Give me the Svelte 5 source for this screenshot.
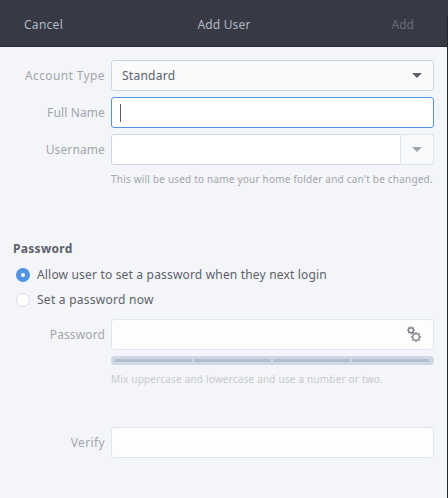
<script>
  const teeth = [0, 45, 90, 135, 180, 225, 270, 315];
  const gears = [
    { x: 4, y: 4.2, r: 2.4, tip: 4 },
    { x: 9, y: 11, r: 3.3, tip: 5.1 }
  ];
</script>

<div class="dialog">
  <header>
    <span class="cancel">Cancel</span>
    <span class="title">Add User</span>
    <span class="add">Add</span>
  </header>
  <i class="edge"></i>

  <main>
    <div class="row">
      <span class="label type">Account Type</span>
      <div class="field combo"><span class="standard">Standard</span><i class="arrow"></i></div>
    </div>
    <div class="row">
      <span class="label">Full Name</span>
      <div class="field focus"><i class="caret"></i></div>
    </div>
    <div class="row">
      <span class="label">Username</span>
      <div class="field split"><div class="drop"><i class="arrow"></i></div></div>
    </div>
    <p class="hint home">This will be used to name your home folder and can't be changed.</p>

    <h2>Password</h2>
    <div class="choice"><i class="radio on"></i><span class="allow">Allow user to set a password when they next login</span></div>
    <div class="choice"><i class="radio"></i><span class="now">Set a password now</span></div>

    <div class="row">
      <span class="label">Password</span>
      <div class="field off">
        <svg width="15" height="17" viewBox="0 0 15 17" fill="none" stroke="#7c7f87">
          {#each gears as g}
            <circle cx={g.x} cy={g.y} r={g.r} stroke-width="1.2" />
            {#each teeth as a}
              <path d="M{g.x} {g.y - g.r}V{g.y - g.tip}" stroke-width="1.3" transform="rotate({a} {g.x} {g.y})" />
            {/each}
          {/each}
        </svg>
      </div>
    </div>
    <div class="level"><i></i><i></i><i></i><i></i></div>
    <p class="hint mix">Mix uppercase and lowercase and use a number or two.</p>

    <div class="row verify">
      <span class="label vf">Verify</span>
      <div class="field off"></div>
    </div>
  </main>
</div>

<style>
  .dialog {
    position: relative;
    box-sizing: border-box;
    width: 448px;
    height: 498px;
    overflow: hidden;
    background: #f4f5f8;
    color: #5c616c;
    font: 12px/16px "Noto Sans", sans-serif;
    white-space: nowrap;
  }
  header {
    box-sizing: border-box;
    height: 47px;
    padding: 3px 24px 0;
    display: grid;
    grid-template-columns: 1fr auto 1fr;
    align-items: center;
    background: #373a45;
    border-bottom: 1px solid #2b2d37;
    color: #afb8c5;
  }
  .cancel { letter-spacing: 0.28px; }
  .title { letter-spacing: 0.15px; }
  .add { justify-self: end; margin-right: 10px; color: #686c77; }
  .edge {
    position: absolute;
    right: 0;
    top: 16px;
    bottom: 0;
    width: 1px;
    background: #24262d;
  }
  main { padding: 13px 14px 0 13px; }
  .row { display: flex; align-items: center; height: 31px; margin-bottom: 6px; }
  .label { width: 92px; margin-right: 6px; text-align: right; color: #a3a5ac; letter-spacing: 0.12px; }
  .type { letter-spacing: 0.38px; }
  .vf { letter-spacing: 0.38px; }
  .field {
    box-sizing: border-box;
    width: 323px;
    height: 31px;
    display: flex;
    align-items: center;
    background: #fff;
    border: 1px solid #cdd5e5;
    border-radius: 3px;
  }
  .combo { justify-content: space-between; padding: 0 11px 0 10px; background: #fafafb; }
  .standard { letter-spacing: 0.25px; }
  .focus { padding-left: 8px; border-color: #5294e2; }
  .caret { width: 1px; height: 18px; background: #5c616c; }
  .split { justify-content: flex-end; }
  .drop {
    box-sizing: border-box;
    width: 34px;
    height: 31px;
    margin-right: -1px;
    display: flex;
    align-items: center;
    justify-content: center;
    background: #f8f9fb;
    border: 1px solid #e0e4ed;
    border-radius: 0 3px 3px 0;
    color: #a0a3aa;
  }
  .arrow {
    width: 0;
    border: 5px solid transparent;
    border-top-color: currentColor;
    border-bottom: 0;
  }
  .hint { margin: 0; padding-left: 98px; font-size: 10px; line-height: 16px; color: #a3a5ac; }
  .home { letter-spacing: 0.2px; }
  h2 { margin: 54px 0 5px; font-size: 12px; line-height: 16px; font-weight: 700; letter-spacing: 0.3px; }
  .choice { display: flex; align-items: center; height: 25px; padding-left: 3px; }
  .choice + .choice { margin-bottom: 7px; }
  .allow { letter-spacing: 0.18px; }
  .now { letter-spacing: 0.26px; }
  .radio {
    box-sizing: border-box;
    width: 14px;
    height: 14px;
    margin-right: 7px;
    border: 1px solid #d8dbe9;
    border-radius: 50%;
    background: #fff;
  }
  .radio.on { border: 5px solid #5294e2; }
  .off { justify-content: flex-end; padding-right: 11px; background: #fdfdfd; border-color: #e1e5ed; }
  .level {
    box-sizing: border-box;
    width: 323px;
    height: 9px;
    margin-left: 98px;
    padding: 3px 5px 3px 4px;
    display: flex;
    gap: 2px;
    background: #cfd6e6;
    border-radius: 4px;
  }
  .level i { flex: 1; height: 3px; border-radius: 1px; background: #b5bcce; }
  .mix { margin-top: 6px; color: #c7c9cd; letter-spacing: 0.19px; }
  .verify { margin-top: 40px; }
</style>
